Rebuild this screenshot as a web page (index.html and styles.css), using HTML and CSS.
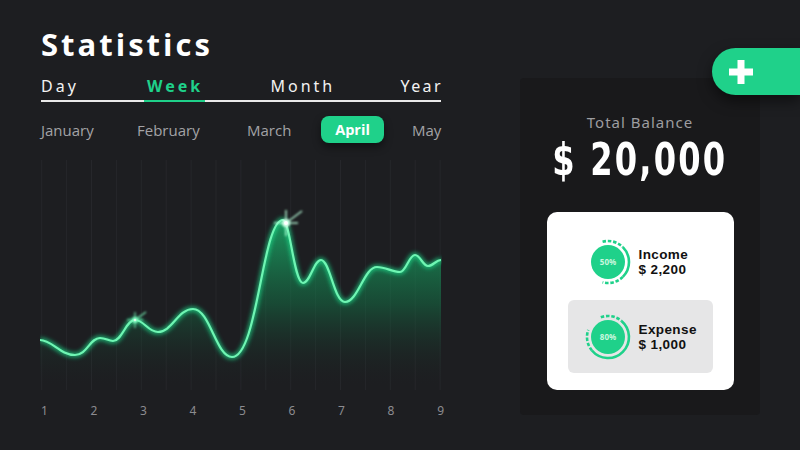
FILE: index.html
```html
<!DOCTYPE html>
<html>
<head>
<meta charset="utf-8">
<link rel="stylesheet" href="styles.css">
</head>
<body>
<div class="page">
  <section class="stats">
    <h1 class="title">Statistics</h1>
    <nav class="tabs">
      <span class="tab">Day</span>
      <span class="tab active">Week</span>
      <span class="tab">Month</span>
      <span class="tab">Year</span>
    </nav>
    <div class="months">
      <span class="month">January</span>
      <span class="month">February</span>
      <span class="month">March</span>
      <span class="month current">April</span>
      <span class="month">May</span>
    </div>
    <svg class="chart" width="402" height="235" viewBox="0 0 402 235">
      <defs>
        <linearGradient id="fillGrad" x1="0" y1="0" x2="0" y2="1" gradientUnits="objectBoundingBox">
          <stop offset="0" stop-color="#1bbf73" stop-opacity="0.75"/>
          <stop offset="0.5" stop-color="#12854f" stop-opacity="0.42"/>
          <stop offset="1" stop-color="#1d1e21" stop-opacity="0"/>
        </linearGradient>
        <filter id="blur" x="-20%" y="-20%" width="140%" height="140%">
          <feGaussianBlur stdDeviation="2.2"/>
        </filter>
        <filter id="blurSmall" x="-50%" y="-50%" width="200%" height="200%">
          <feGaussianBlur stdDeviation="1"/>
        </filter>
      </defs>
      <g class="grid">
        <line x1="1.7" y1="2" x2="1.7" y2="232"/>
        <line x1="26.6" y1="2" x2="26.6" y2="232"/>
        <line x1="51.5" y1="2" x2="51.5" y2="232"/>
        <line x1="76.4" y1="2" x2="76.4" y2="232"/>
        <line x1="101.3" y1="2" x2="101.3" y2="232"/>
        <line x1="126.2" y1="2" x2="126.2" y2="232"/>
        <line x1="151.1" y1="2" x2="151.1" y2="232"/>
        <line x1="176" y1="2" x2="176" y2="232"/>
        <line x1="200.9" y1="2" x2="200.9" y2="232"/>
        <line x1="225.8" y1="2" x2="225.8" y2="232"/>
        <line x1="250.7" y1="2" x2="250.7" y2="232"/>
        <line x1="275.6" y1="2" x2="275.6" y2="232"/>
        <line x1="300.5" y1="2" x2="300.5" y2="232"/>
        <line x1="325.4" y1="2" x2="325.4" y2="232"/>
        <line x1="350.3" y1="2" x2="350.3" y2="232"/>
        <line x1="375.2" y1="2" x2="375.2" y2="232"/>
        <line x1="400.1" y1="2" x2="400.1" y2="232"/>
      </g>
      <path fill="url(#fillGrad)" d="M0,182 C12,182 20,197 35,197 C47,197 50,180 60,180 C66,180 68,183 73,183 C82,183 86,162 95,162 C104,162 108,174 118,174 C132,174 138,151 153,151 C170,151 176,199 192,199 C218,199 222,62 243,62 C250,62 254,125 263,125 C270,125 274,102 281,102 C290,102 294,144 305,144 C318,144 324,109 337,109 C346,109 352,114 360,114 C366,114 369,97 375,97 C380,97 383,108 388,108 C393,108 396,102 401,102 L401,230 L0,230 Z"/>
      <path class="glow" filter="url(#blur)" d="M0,182 C12,182 20,197 35,197 C47,197 50,180 60,180 C66,180 68,183 73,183 C82,183 86,162 95,162 C104,162 108,174 118,174 C132,174 138,151 153,151 C170,151 176,199 192,199 C218,199 222,62 243,62 C250,62 254,125 263,125 C270,125 274,102 281,102 C290,102 294,144 305,144 C318,144 324,109 337,109 C346,109 352,114 360,114 C366,114 369,97 375,97 C380,97 383,108 388,108 C393,108 396,102 401,102"/>
      <path class="line" d="M0,182 C12,182 20,197 35,197 C47,197 50,180 60,180 C66,180 68,183 73,183 C82,183 86,162 95,162 C104,162 108,174 118,174 C132,174 138,151 153,151 C170,151 176,199 192,199 C218,199 222,62 243,62 C250,62 254,125 263,125 C270,125 274,102 281,102 C290,102 294,144 305,144 C318,144 324,109 337,109 C346,109 352,114 360,114 C366,114 369,97 375,97 C380,97 383,108 388,108 C393,108 396,102 401,102"/>
      <g class="spark" filter="url(#blurSmall)">
        <circle cx="95" cy="162" r="3" fill="#8effc8"/>
        <line x1="95" y1="154" x2="95" y2="170"/>
        <line x1="87" y1="162" x2="103" y2="162"/>
        <line x1="95" y1="162" x2="106" y2="154"/>
      </g>
      <g class="spark big" filter="url(#blurSmall)">
        <circle cx="246" cy="65" r="4" fill="#e6fff2"/>
        <line x1="246" y1="52" x2="246" y2="78"/>
        <line x1="234" y1="65" x2="258" y2="65"/>
        <line x1="246" y1="65" x2="262" y2="53"/>
      </g>
      <circle cx="246" cy="65" r="2" fill="#ffffff"/>
      <circle cx="95" cy="162" r="1.3" fill="#d8ffe9"/>
    </svg>
    <div class="axis">
      <span>1</span><span>2</span><span>3</span><span>4</span><span>5</span><span>6</span><span>7</span><span>8</span><span>9</span>
    </div>
  </section>

  <aside class="balance">
    <p class="balance-label">Total Balance</p>
    <p class="balance-value"><span>$ 20,000</span></p>
    <div class="summary">
      <div class="entry">
        <svg class="ring" width="48" height="48" viewBox="0 0 48 48">
          <circle cx="24" cy="24" r="17" fill="#1fd18a"/>
          <path class="dash" d="M18.57,3.72 A21,21 0 0 1 38.85,9.15"/>
          <path class="solid" d="M38.85,9.15 A21,21 0 0 1 38.85,38.85"/>
          <path class="dash" d="M38.85,38.85 A21,21 0 0 1 18.57,44.28"/>
          <text x="24" y="26.8" class="pct">50%</text>
        </svg>
        <div class="entry-text">
          <span>Income</span>
          <span>$ 2,200</span>
        </div>
      </div>
      <div class="entry selected">
        <svg class="ring" width="48" height="48" viewBox="0 0 48 48">
          <circle cx="24" cy="24" r="17" fill="#1fd18a"/>
          <path class="dash" d="M16.82,4.27 A21,21 0 0 1 37.5,7.91"/>
          <path class="solid" d="M37.5,7.91 A21,21 0 1 1 7.91,37.5"/>
          <path class="dash" d="M7.91,37.5 A21,21 0 0 1 4.27,16.82"/>
          <text x="24" y="26.8" class="pct">80%</text>
        </svg>
        <div class="entry-text">
          <span>Expense</span>
          <span>$ 1,000</span>
        </div>
      </div>
    </div>
  </aside>

  <button class="add" aria-label="Add">
    <svg width="26" height="26" viewBox="0 0 26 26"><path d="M13 1 V25 M1 13 H25" stroke="#ffffff" stroke-width="7"/></svg>
  </button>
</div>
</body>
</html>
```
FILE: styles.css
```css
* { box-sizing: border-box; }
html, body { margin: 0; padding: 0; }
body {
  background: #1d1e21;
  width: 800px;
  height: 450px;
  overflow: hidden;
  font-family: "Open Sans", "Noto Sans", sans-serif;
}
.page {
  position: relative;
  display: flex;
  align-items: flex-start;
  padding-left: 41px;
  height: 450px;
}
.stats {
  width: 402px;
  display: flex;
  flex-direction: column;
}
.title {
  margin: 24px 0 0;
  font-family: "Open Sans", sans-serif;
  font-weight: 700;
  font-size: 31px;
  line-height: 40px;
  letter-spacing: 3px;
  color: #ffffff;
}
.tabs {
  margin-top: 12px;
  width: 400px;
  display: flex;
  justify-content: space-between;
  align-items: flex-end;
  border-bottom: 2px solid #e9e9e9;
}
.tab {
  font-size: 16px;
  line-height: 20px;
  padding-bottom: 4px;
  letter-spacing: 3px;
  color: #f2f2f2;
  font-family: "Noto Sans", sans-serif;
}
.tab:last-child { letter-spacing: 2.4px; margin-right: -2px; }
.tab.active {
  color: #1fd18a;
  font-weight: 700;
  letter-spacing: 3px;
  padding: 0 2px 4px 3px;
  border-bottom: 2px solid #1fd18a;
  margin-bottom: -2px;
}
.months {
  margin-top: 14px;
  display: grid;
  grid-template-columns: 96px 110px 74px 91px auto;
  align-items: center;
  height: 27px;
}
.month {
  font-size: 15px;
  color: #a3a3a6;
}
.month.current {
  width: 63px;
  height: 27px;
  line-height: 27px;
  text-align: center;
  border-radius: 8px;
  background: #1fd18a;
  color: #ffffff;
  font-weight: 700;
  font-size: 14.5px;
  box-shadow: 0 4px 8px rgba(0, 0, 0, 0.45);
}
.chart {
  display: block;
  margin-top: 15px;
  margin-left: -1px;
}
.grid line { stroke: #26272b; stroke-width: 1; }
.glow { fill: none; stroke: #1fe390; stroke-width: 5; opacity: 0.7; }
.line { fill: none; stroke: #6ff5b3; stroke-width: 2.2; }
.spark line { stroke: #7dffbf; stroke-width: 1.1; }
.spark.big line { stroke: #b8ffdb; stroke-width: 1.4; }
.axis {
  margin-top: 10px;
  width: 403px;
  display: flex;
  justify-content: space-between;
  font-family: "Noto Sans", sans-serif;
  font-size: 12px;
  line-height: 16px;
  color: #8c8c90;
}
.balance {
  margin: 78px 0 0 77px;
  width: 240px;
  height: 337px;
  background: #19191b;
  border-radius: 4px;
  display: flex;
  flex-direction: column;
  align-items: center;
  padding-top: 34px;
}
.balance-label {
  margin: 0;
  font-family: "Noto Sans", sans-serif;
  font-size: 15px;
  line-height: 20px;
  letter-spacing: 1px;
  color: #9d9da0;
}
.balance-value {
  margin: 4px 0 0;
  width: 240px;
  text-align: center;
  font-family: "DejaVu Sans", "Liberation Sans", sans-serif;
  font-weight: 700;
  font-size: 44px;
  line-height: 48px;
  letter-spacing: 3px;
  color: #ffffff;
}
.balance-value span {
  display: inline-block;
  transform: scaleX(0.73);
}
.summary {
  margin-top: 28px;
  width: 187px;
  height: 178px;
  background: #ffffff;
  border-radius: 10px;
  padding: 13px 21px 0;
  display: flex;
  flex-direction: column;
  gap: 2px;
}
.entry {
  height: 73px;
  border-radius: 6px;
  display: flex;
  align-items: center;
  padding-left: 16px;
  gap: 7px;
}
.entry.selected { background: #e6e6e7; }
.ring .dash { fill: none; stroke: #1fd18a; stroke-width: 2.6; stroke-dasharray: 3.5 1.8; }
.ring .solid { fill: none; stroke: #1fd18a; stroke-width: 2.6; }
.pct {
  font-family: "Noto Sans", sans-serif;
  font-size: 8px;
  font-weight: 700;
  fill: #c9f7de;
  text-anchor: middle;
}
.entry-text {
  display: flex;
  flex-direction: column;
  font-family: "Liberation Sans", sans-serif;
  font-weight: 700;
  font-size: 13.5px;
  line-height: 15px;
  letter-spacing: 0.4px;
  color: #111111;
}
.add {
  position: absolute;
  top: 48px;
  right: 0;
  width: 88px;
  height: 47px;
  border: none;
  border-radius: 24px 0 0 24px;
  background: #1fd18a;
  padding: 0 0 0 16px;
  display: flex;
  align-items: center;
  box-shadow: 0 6px 14px rgba(0, 0, 0, 0.5);
}
.add svg { display: block; }
```
